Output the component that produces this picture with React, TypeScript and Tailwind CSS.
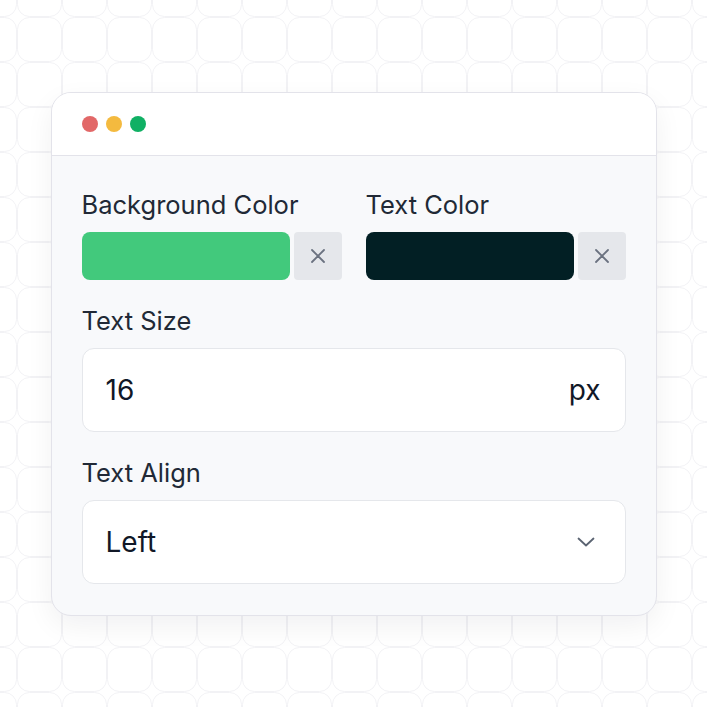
import React from "react";

function CloseIcon() {
  return (
    <svg width="16" height="16" viewBox="0 0 16 16" fill="none" stroke="#6b7280" strokeWidth="1.8" strokeLinecap="round">
      <path d="M2 2l12 12M14 2L2 14" />
    </svg>
  );
}

function Chevron() {
  return (
    <svg width="18" height="10" viewBox="0 0 18 10" fill="none" stroke="#5b6472" strokeWidth="1.8" strokeLinecap="round" strokeLinejoin="round">
      <path d="M1.5 1.5 9 8.5l7.5-7" />
    </svg>
  );
}

function ColorField({ label, color }: { label: string; color: string }) {
  return (
    <div className="flex flex-col">
      <span className="mb-[11px] text-[25.5px] leading-8 text-[#212936]">{label}</span>
      <div className="flex gap-1">
        <div className="h-12 flex-1 rounded-[8px]" style={{ backgroundColor: color }} />
        <button className="flex h-12 w-12 items-center justify-center rounded-[4px] bg-[#e5e7eb]">
          <CloseIcon />
        </button>
      </div>
    </div>
  );
}

export default function App() {
  return (
    <div
      className="relative flex h-[707px] w-[707px] items-center justify-center overflow-hidden bg-white"
      style={{ fontFamily: "Inter, 'Noto Sans', sans-serif" }}
    >
      {/* tiled background */}
      <svg className="absolute inset-0" width="707" height="707">
        <defs>
          <pattern id="tiles" x="17" y="17" width="45" height="45" patternUnits="userSpaceOnUse">
            <rect x="0.5" y="0.5" width="44" height="44" rx="12" fill="none" stroke="#f2f2f5" strokeWidth="1" />
          </pattern>
        </defs>
        <rect width="707" height="707" fill="url(#tiles)" />
      </svg>

      {/* window */}
      <div className="relative w-[606px] overflow-hidden rounded-[20px] border-[1.5px] border-[#e3e3ea] bg-[#f8f9fb] shadow-[0_10px_28px_rgba(17,24,39,0.06)]">
        <div className="flex h-[63px] items-center gap-2 border-b-[1.5px] border-[#e3e3ea] bg-white px-[30px]">
          <span className="h-4 w-4 rounded-full bg-[#e26868]" />
          <span className="h-4 w-4 rounded-full bg-[#f4ba3f]" />
          <span className="h-4 w-4 rounded-full bg-[#10b064]" />
        </div>

        <div className="flex flex-col px-[30px] pb-[31px] pt-[33px]">
          <div className="grid grid-cols-2 gap-6">
            <ColorField label="Background Color" color="#42c97c" />
            <ColorField label="Text Color" color="#021f24" />
          </div>

          <span className="mb-[11px] mt-[25px] text-[25.5px] leading-8 text-[#212936]">Text Size</span>
          <div className="flex h-[84px] items-center justify-between rounded-[12px] border-[1.5px] border-[#e5e7eb] bg-white pl-[23px] pr-6 text-[28px] text-[#111827]">
            <span>16</span>
            <span>px</span>
          </div>

          <span className="mb-[11px] mt-[25px] text-[25.5px] leading-8 text-[#212936]">Text Align</span>
          <div className="flex h-[84px] items-center justify-between rounded-[12px] border-[1.5px] border-[#e5e7eb] bg-white pl-[23px] pr-[30px] text-[28px] text-[#111827]">
            <span>Left</span>
            <Chevron />
          </div>
        </div>
      </div>
    </div>
  );
}
